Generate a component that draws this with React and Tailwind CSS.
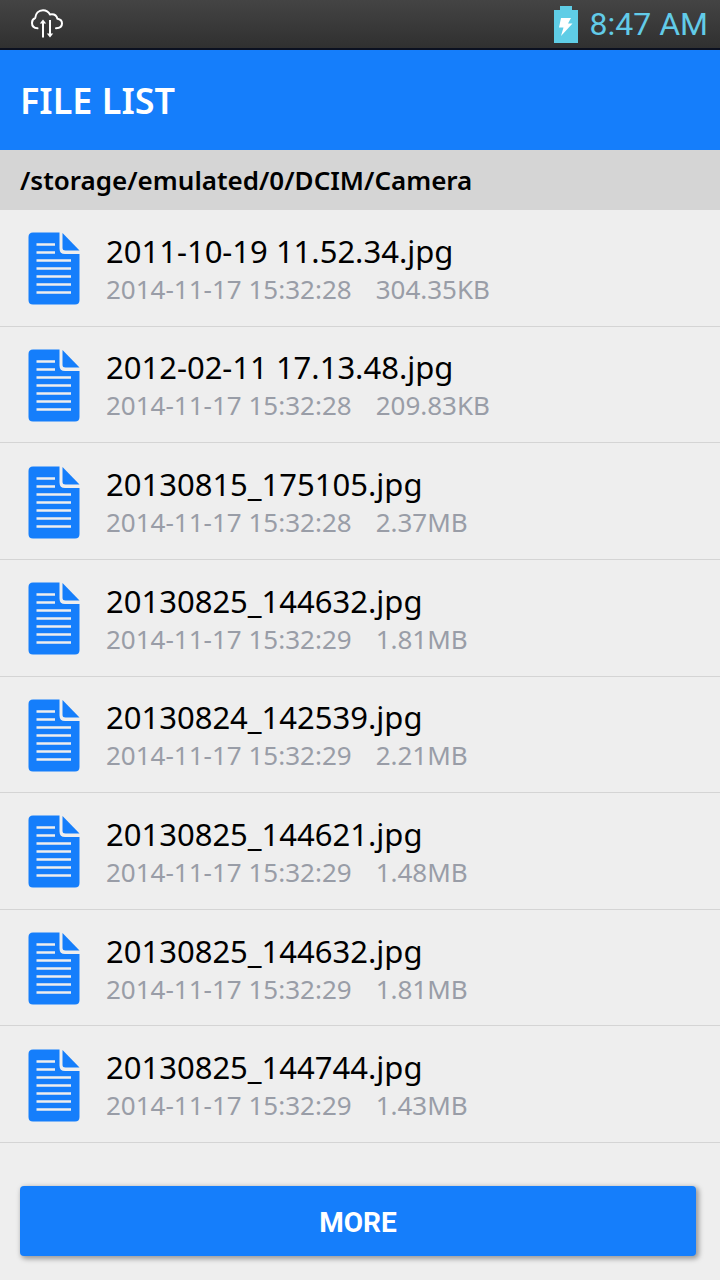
const files = [
  { id: 1, name: "2011-10-19 11.52.34.jpg", date: "2014-11-17 15:32:28", size: "304.35KB" },
  { id: 2, name: "2012-02-11 17.13.48.jpg", date: "2014-11-17 15:32:28", size: "209.83KB" },
  { id: 3, name: "20130815_175105.jpg", date: "2014-11-17 15:32:28", size: "2.37MB" },
  { id: 4, name: "20130825_144632.jpg", date: "2014-11-17 15:32:29", size: "1.81MB" },
  { id: 5, name: "20130824_142539.jpg", date: "2014-11-17 15:32:29", size: "2.21MB" },
  { id: 6, name: "20130825_144621.jpg", date: "2014-11-17 15:32:29", size: "1.48MB" },
  { id: 7, name: "20130825_144632.jpg", date: "2014-11-17 15:32:29", size: "1.81MB" },
  { id: 8, name: "20130825_144744.jpg", date: "2014-11-17 15:32:29", size: "1.43MB" },
];

function CloudSyncIcon() {
  return (
    <svg className="h-[30px] w-8" viewBox="0 0 32 30" fill="none" stroke="#fff" aria-hidden="true">
      <path
        d="M6.5 19.3C3 19 1 16.8 1 14c0-2.4 1-4.2 3.2-5C4.6 4.5 7.5 1.2 12 1.2c3.2 0 5.5 1.5 7 4.3 4-.7 6.6 1 7.4 4.2 2.8.4 4.6 2.2 4.6 4.8 0 2.8-2.2 4.7-6 4.8"
        strokeWidth="2"
        strokeLinecap="round"
        strokeLinejoin="round"
      />
      <path d="M12 28.5V13M19 11v14" strokeWidth="2" />
      <path d="M12 10.5l3.2 4H8.8zM19 28.5l3.2-4h-6.4z" fill="#fff" stroke="none" />
    </svg>
  );
}

function BatteryIcon() {
  return (
    <svg className="h-[37px] w-6" viewBox="0 0 24 37" aria-hidden="true">
      <path d="M6 0h12v4h6v33H0V4h6z" fill="#5fcde6" />
      <path d="M7 12h10l-3 5.5h4.5L7 30l2.5-8.5H5z" fill="#fff" />
    </svg>
  );
}

function FileIcon() {
  return (
    <svg className="h-[73px] w-[52px] shrink-0" viewBox="0 0 52 73" aria-hidden="true">
      <path d="M5 .5H31.500v16q0 5.500 5.500 5.500H51.500v46q0 4.500-4.500 4.500H5Q.5 72.500 .5 68V5Q.5 .5 5 .5z" fill="#157efb" />
      <path d="M34.500 1L51.500 18.500H37.500Q34.500 18.500 34.500 16z" fill="#157efb" />
      <path d="M8.500 12.500h18.500M8.500 20.500h18.500M8.500 28.500h34.500M8.500 36.500h34.500M8.500 44.500h34.500M8.500 52.500h34.500M8.500 60.500h34.500" stroke="#eee" strokeWidth="2.600" />
    </svg>
  );
}

function StatusBar() {
  return (
    <div className="flex h-[50px] items-center justify-between border-b-2 border-[#0b1020] bg-linear-to-b from-[#444] to-[#303030] pr-3 pl-[31px]">
      <CloudSyncIcon />
      <div className="flex items-center gap-3 font-['Roboto',sans-serif] text-[32px] leading-10 text-[#62cbe8]">
        <BatteryIcon />
        <span>8:47 AM</span>
      </div>
    </div>
  );
}

export default function App() {
  return (
    <div className="flex min-h-screen flex-col bg-[#eee] font-['Noto_Sans',sans-serif] text-black">
      <StatusBar />

      <header className="flex h-[100px] items-center bg-[#157efb] px-5 pt-0.5">
        <h1 className="text-[36px] leading-10 font-semibold text-white">FILE LIST</h1>
      </header>

      <div className="flex h-[60px] items-center bg-[#d5d5d5] px-5">
        <p className="text-[26px] leading-8 font-semibold">/storage/emulated/0/DCIM/Camera</p>
      </div>

      {/* File rows */}
      <ul className="grid flex-1 auto-rows-fr">
        {files.map((file) => (
          <li key={file.id} className="border-b border-[#d4d4d4]">
            <button type="button" className="flex h-full w-full items-center gap-[26px] px-7 pt-0.5 text-left">
              <FileIcon />
              <span className="flex flex-col">
                <span className="text-[31px] leading-10">{file.name}</span>
                <span className="flex gap-6 text-[26px] leading-9 text-[#999da7]">
                  <span>{file.date}</span>
                  <span>{file.size}</span>
                </span>
              </span>
            </button>
          </li>
        ))}
      </ul>

      <footer className="pt-[43px] pr-6 pb-6 pl-5">
        <button
          type="button"
          className="h-[70px] w-full rounded bg-[#157efb] pt-1 font-['Roboto',sans-serif] text-[28px] font-bold text-white shadow-[2px_2px_5px_1px_rgba(0,0,0,0.35)]"
        >
          MORE
        </button>
      </footer>
    </div>
  );
}
